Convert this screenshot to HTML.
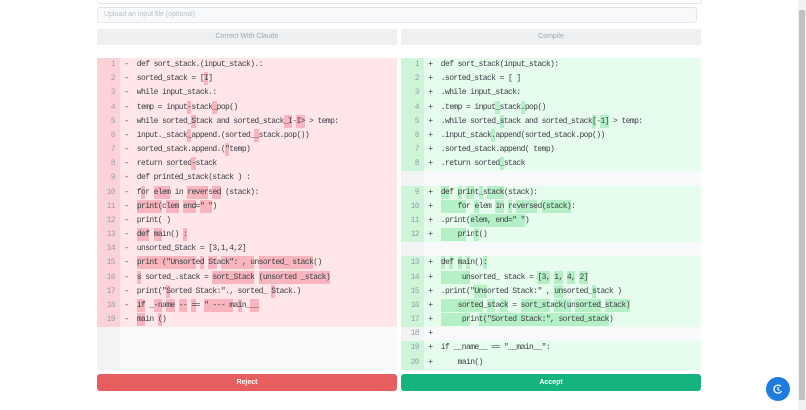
<!DOCTYPE html>
<html><head><style>
body{margin:0;width:806px;height:410px;background:#fff;position:relative;overflow:hidden;font-family:"Liberation Sans",sans-serif}
.top{position:absolute;left:97px;top:-6px;width:603px;height:8px;border:1px solid #e3e6ea;border-radius:3px}
.upl{position:absolute;left:97px;top:7px;width:592px;height:14px;border:1px solid #e3e6ea;border-radius:3px;background:#f8f9fa;font-size:7px;color:#b9bec4;line-height:14px;padding-left:6px}
.btn{position:absolute;top:29px;height:16px;width:300px;background:#eeeff1;border-radius:2px;font-size:7px;color:#a3a8ad;text-align:center;line-height:16px}
.pan{position:absolute;top:58px;width:300px;height:312px;background:#f8f9fb}
.row{position:relative;height:14.18px;line-height:14.18px;font-family:"Liberation Mono",monospace;font-size:8px;letter-spacing:-0.6px;white-space:pre;color:#3c4146}
.row .n{display:inline-block;width:23px;text-align:right;padding-right:5px;box-sizing:border-box;color:#9aa0a6;height:100%}
.d{background:#ffe6e9}.d .n{background:#fcd2d7}
.a{background:#e6fcec}.a .n{background:#cdf5d8}
.e{background:#f8f9fb}.e .n{background:#f1f3f5}
.d i{font-style:normal;background:#f8b5bd;padding:2px 0}
.a i{font-style:normal;background:#b5efc5;padding:2px 0}
.bb{position:absolute;top:374px;height:17px;width:300px;border-radius:3px;color:#fff;font-size:7px;font-weight:bold;text-align:center;line-height:17px}
.sb{position:absolute;left:798px;top:0;width:8px;height:410px;background:#f1f1f1}
.th{position:absolute;left:799px;top:10px;width:6px;height:390px;background:#c1c1c1;border-radius:1px}
.fab{position:absolute;left:766px;top:377px;width:24px;height:24px;border-radius:50%;background:#1e7be0}
</style></head><body>
<div class="top"></div>
<div class="upl">Upload an input file (optional)</div>
<div class="btn" style="left:97px">Correct With Claude</div>
<div class="btn" style="left:401px">Compile</div>
<div class="pan" style="left:97px">
<div class="row d"><span class="n">1</span> -  def sort_stack.(input_stack).:</div>
<div class="row d"><span class="n">2</span> -  sorted_stack = [<i>I</i>]</div>
<div class="row d"><span class="n">3</span> -  while input_stack.:</div>
<div class="row d"><span class="n">4</span> -  temp = input<i>-</i>stack<i>_</i>pop()</div>
<div class="row d"><span class="n">5</span> -  while sorted_<i>S</i>tack and sorted_stack<i>_I</i>-<i>I&gt;</i> &gt; temp:</div>
<div class="row d"><span class="n">6</span> -  input._stack<i>_</i>append.(sorted_<i>_</i>stack.pop())</div>
<div class="row d"><span class="n">7</span> -  sorted_stack.append.(<i>"</i>temp)</div>
<div class="row d"><span class="n">8</span> -  return sorted<i>-</i>stack</div>
<div class="row d"><span class="n">9</span> -  def printed_stack(stack ) :</div>
<div class="row d"><span class="n">10</span> -  f<i>o</i>r <i>elem</i> in <i>rever</i>s<i>ed</i> (stack):</div>
<div class="row d"><span class="n">11</span> -  <i>print(</i>c<i>lem</i> <i>end</i>=<i>" "</i>)</div>
<div class="row d"><span class="n">12</span> -  print( )</div>
<div class="row d"><span class="n">13</span> -  <i>def</i> <i>ma</i>in() <i>:</i></div>
<div class="row d"><span class="n">14</span> -  unsorted_Stack = [3,1,4,2]</div>
<div class="row d"><span class="n">15</span> -  <i>print ("Unsort</i>e<i>d</i> <i>St</i>a<i>ck": , u</i>n<i>sorted_ stack</i>()</div>
<div class="row d"><span class="n">16</span> -  <i>s</i> sorted_.stack = <i>sort_Stack</i> <i>(unsorted _stack)</i></div>
<div class="row d"><span class="n">17</span> -  print("<i>S</i>orted Stack:"., sorted_ <i>S</i>tack.)</div>
<div class="row d"><span class="n">18</span> -  <i>if</i> _<i>-n</i>a<i>me</i> <i>--</i> <i>=</i>= <i>" --- m</i>a<i>i</i>n_<i>__</i></div>
<div class="row d"><span class="n">19</span> -  <i>ma</i>in <i>(</i>)</div>
<div class="row e" style="height:43px"><span class="n"></span></div>
</div>
<div class="pan" style="left:401px">
<div class="row a"><span class="n">1</span> +  def sort_stack(input_stack):</div>
<div class="row a"><span class="n">2</span> +  .sorted_stack = [ ]</div>
<div class="row a"><span class="n">3</span> +  .while input_stack:</div>
<div class="row a"><span class="n">4</span> +  .temp = input<i>_</i>stack<i>.</i>pop()</div>
<div class="row a"><span class="n">5</span> +  .while sorted_<i>s</i>tack and sorted_stack<i>[</i>-<i>1]</i> &gt; temp:</div>
<div class="row a"><span class="n">6</span> +  .input_stack<i>.</i>append(sorted_stack.pop())</div>
<div class="row a"><span class="n">7</span> +  .sorted_stack.append( temp)</div>
<div class="row a"><span class="n">8</span> +  .return sorted<i>_</i>stack</div>
<div class="row e"><span class="n"></span></div>
<div class="row a"><span class="n">9</span> +  <i>de</i>f <i>p</i>r<i>in</i>t<i>_</i>s<i>tack</i>(stack):</div>
<div class="row a"><span class="n">10</span> +  <i>    fo</i>r <i>e</i>lem <i>in</i> <i>r</i>e<i>verse</i>d<i>(stack)</i>:</div>
<div class="row a"><span class="n">11</span> +  .print(<i>elem, end=" "</i>)</div>
<div class="row a"><span class="n">12</span> +  <i>    pr</i>in<i>t</i>()</div>
<div class="row e"><span class="n"></span></div>
<div class="row a"><span class="n">13</span> +  <i>d</i>e<i>f</i> <i>m</i>a<i>i</i>n()<i>:</i></div>
<div class="row a"><span class="n">14</span> +  <i>     un</i>sorted_ stack = <i>[3,</i> <i>1,</i> <i>4,</i> <i>2]</i></div>
<div class="row a"><span class="n">15</span> +  .print("<i>Uns</i>orted Stack:" , <i>un</i>sorted_<i>s</i>tack )</div>
<div class="row a"><span class="n">16</span> +  <i>    sorted</i>_<i>st</i>a<i>ck</i> = <i>sort_st</i>a<i>ck(u</i>n<i>sorted</i>_<i>stack)</i></div>
<div class="row a"><span class="n">17</span> +  <i>     pr</i>in<i>t("Sorted Stack:", sorted_stack</i>)</div>
<div class="row e"><span class="n">18</span> +</div>
<div class="row a"><span class="n">19</span> +  if __name__ == "__main__":</div>
<div class="row a"><span class="n">20</span> +      main()</div>
</div>
<div class="bb" style="left:97px;background:#e85d5d">Reject</div>
<div class="bb" style="left:401px;background:#15b47f">Accept</div>
<div class="sb"></div><div class="th"></div>
<div class="fab"><svg width="24" height="24" viewBox="0 0 24 24"><path d="M15 9.5A4 4 0 1 0 15.5 14" fill="none" stroke="#fff" stroke-width="1.3"/><path d="M12 10v2.5l1.5 1" fill="none" stroke="#fff" stroke-width="1.2"/></svg></div>
</body></html>
